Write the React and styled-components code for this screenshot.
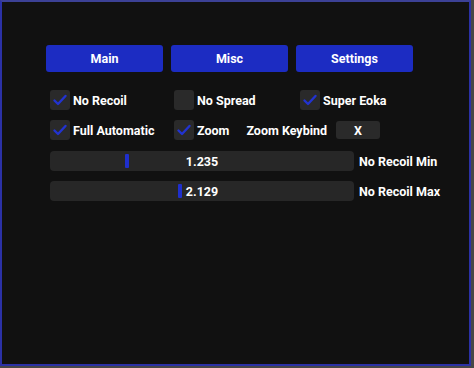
import React from 'react';
import styled, { createGlobalStyle } from 'styled-components';

const GlobalStyle = createGlobalStyle`
  html, body {
    margin: 0;
    padding: 0;
    background: #474747;
    font-family: 'Roboto', 'Liberation Sans', sans-serif;
  }
`;

const Window = styled.div`
  box-sizing: border-box;
  width: 471px;
  height: 366px;
  background: #111111;
  border: 2px solid #2b31a6;
  border-top-color: #3c4196;
  padding: 43px 0 0 44px;
  display: flex;
  flex-direction: column;
`;

const Tabs = styled.div`
  display: grid;
  grid-template-columns: repeat(3, 117px);
  column-gap: 8px;
`;

const TabButton = styled.button`
  height: 27px;
  border: none;
  border-radius: 3px;
  background: #1c2cc2;
  color: #ffffff;
  font-family: inherit;
  font-weight: 700;
  font-size: 12.5px;
  padding: 0;
  cursor: pointer;
`;

const Options = styled.div`
  margin-top: 18px;
  padding-left: 4px;
  display: flex;
  flex-direction: column;
  gap: 10px;
`;

const OptionRow = styled.div`
  display: grid;
  grid-template-columns: 124px 126px 120px;
  height: 20px;
  align-items: center;
`;

const Cell = styled.div`
  display: flex;
  align-items: center;
  gap: ${(p) => p.$gap || 0}px;

  & > * {
    flex-shrink: 0;
  }
`;

const CheckLabel = styled.label`
  display: flex;
  align-items: center;
  gap: 3px;
  color: #ffffff;
  font-weight: 700;
  font-size: 12.5px;
  white-space: nowrap;
`;

const Box = styled.span`
  width: 20px;
  height: 20px;
  border-radius: 3px;
  background: #2a2a2a;
  display: flex;
  align-items: center;
  justify-content: center;
`;

const Text = styled.span`
  color: #ffffff;
  font-weight: 700;
  font-size: 12.5px;
  white-space: nowrap;
`;

const KeyButton = styled.span`
  width: 44px;
  height: 18px;
  margin-left: -8px;
  border-radius: 3px;
  background: #2a2a2a;
  color: #ffffff;
  font-weight: 700;
  font-size: 12.5px;
  display: flex;
  align-items: center;
  justify-content: center;
`;

const Sliders = styled.div`
  margin-top: 11px;
  padding-left: 4px;
  display: flex;
  flex-direction: column;
  gap: 10px;
`;

const SliderRow = styled.div`
  display: flex;
  align-items: center;
  gap: 5px;
  height: 20px;
`;

const Track = styled.div`
  position: relative;
  width: 304px;
  height: 20px;
  border-radius: 4px;
  background: #272727;
  display: flex;
  align-items: center;
  justify-content: center;
`;

const Grab = styled.span`
  position: absolute;
  top: 3px;
  width: 4px;
  height: 14px;
  border-radius: 1px;
  background: #1f2fcc;
`;

const Value = styled.span`
  position: relative;
  color: #ffffff;
  font-weight: 700;
  font-size: 12.5px;
`;

function Check({ checked, children }) {
  return (
    <CheckLabel>
      <Box>
        {checked && (
          <svg width="16" height="16" viewBox="0 0 16 16">
            <path d="M2.5 8.5 L6 12 L13.5 4" fill="none" stroke="#2233d0" strokeWidth="2.4" strokeLinecap="round" strokeLinejoin="round" />
          </svg>
        )}
      </Box>
      {children}
    </CheckLabel>
  );
}

function Slider({ value, max, label }) {
  const left = 2 + (value / max) * (304 - 8);
  return (
    <SliderRow>
      <Track>
        <Grab style={{ left }} />
        <Value>{value.toFixed(3)}</Value>
      </Track>
      <Text>{label}</Text>
    </SliderRow>
  );
}

export default function App() {
  return (
    <>
      <GlobalStyle />
      <Window>
        <Tabs>
          <TabButton>Main</TabButton>
          <TabButton>Misc</TabButton>
          <TabButton>Settings</TabButton>
        </Tabs>
        <Options>
          <OptionRow>
            <Cell><Check checked>No Recoil</Check></Cell>
            <Cell><Check>No Spread</Check></Cell>
            <Cell><Check checked>Super Eoka</Check></Cell>
          </OptionRow>
          <OptionRow>
            <Cell><Check checked>Full Automatic</Check></Cell>
            <Cell $gap={17}>
              <Check checked>Zoom</Check>
              <Text>Zoom Keybind</Text>
              <KeyButton>X</KeyButton>
            </Cell>
          </OptionRow>
        </Options>
        <Sliders>
          <Slider value={1.235} max={5} label="No Recoil Min" />
          <Slider value={2.129} max={5} label="No Recoil Max" />
        </Sliders>
      </Window>
    </>
  );
}
